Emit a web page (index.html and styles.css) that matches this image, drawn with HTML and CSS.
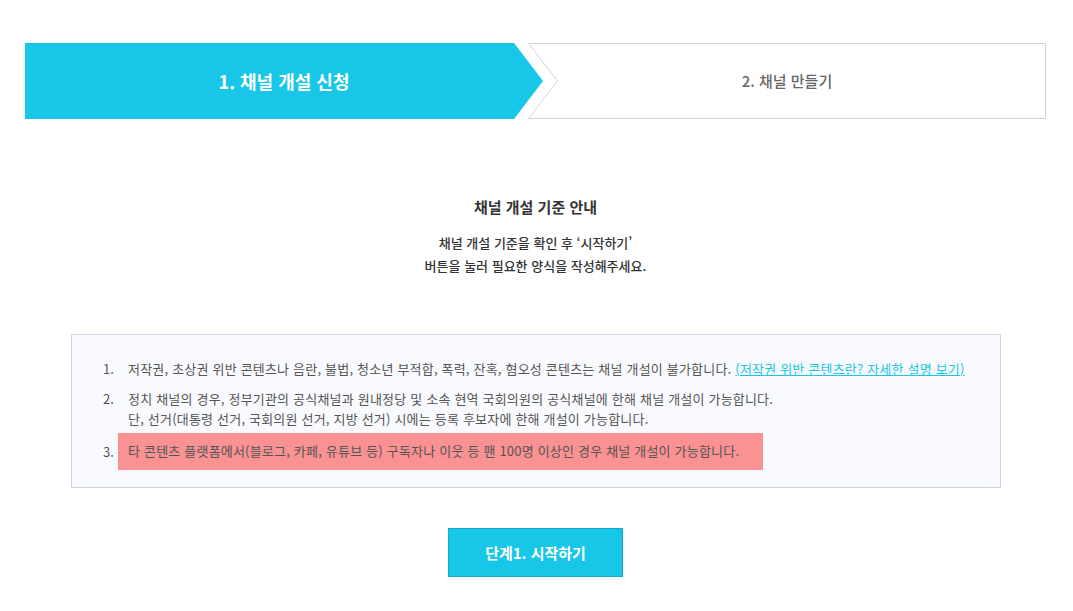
FILE: index.html
```html
<!DOCTYPE html>
<html lang="ko">
<head>
<meta charset="utf-8">
<title>채널 개설</title>
<link rel="stylesheet" href="styles.css">
</head>
<body>
<div class="page">
  <div class="steps">
    <div class="step step-active"><span>1. 채널 개설 신청</span></div>
    <div class="step step-next">
      <svg class="step-frame" width="518" height="76" viewBox="0 0 518 76" aria-hidden="true">
        <polygon points="0.5,0.5 517.5,0.5 517.5,75.5 0.5,75.5 29.5,38" fill="#fff" stroke="#cdd4df" stroke-width="1"/>
      </svg>
      <span>2. 채널 만들기</span>
    </div>
  </div>

  <section class="intro">
    <h2 class="intro-title">채널 개설 기준 안내</h2>
    <p class="intro-text">채널 개설 기준을 확인 후 ‘시작하기’<br>버튼을 눌러 필요한 양식을 작성해주세요.</p>
  </section>

  <div class="rules">
    <ol class="rules-list">
      <li class="rule"><span class="rule-num">1.</span><span class="rule-body">저작권, 초상권 위반 콘텐츠나 음란, 불법, 청소년 부적합, 폭력, 잔혹, 혐오성 콘텐츠는 채널 개설이 불가합니다. <a class="rule-link" href="#">(저작권 위반 콘텐츠란? 자세한 설명 보기)</a></span></li>
      <li class="rule"><span class="rule-num">2.</span><span class="rule-body">정치 채널의 경우, 정부기관의 공식채널과 원내정당 및 소속 현역 국회의원의 공식채널에 한해 채널 개설이 가능합니다.<br>단, 선거(대통령 선거, 국회의원 선거, 지방 선거) 시에는 등록 후보자에 한해 개설이 가능합니다.</span></li>
      <li class="rule rule-highlight"><span class="rule-num">3.</span><span class="rule-body">타 콘텐츠 플랫폼에서(블로그, 카페, 유튜브 등) 구독자나 이웃 등 팬 100명 이상인 경우 채널 개설이 가능합니다.</span></li>
    </ol>
  </div>

  <div class="actions">
    <button class="start-btn" type="button">단계1. 시작하기</button>
  </div>
</div>
</body>
</html>
```

FILE: styles.css
```css
* { box-sizing: border-box; }

html, body {
  margin: 0;
  padding: 0;
  background: #fff;
}

body {
  font-family: "Noto Sans CJK KR", "Noto Sans", sans-serif;
  color: #333;
}

.page {
  width: 1073px;
  padding: 43px 27px 0 25px;
}

.steps {
  display: flex;
  height: 76px;
}

.step {
  position: relative;
  width: 518px;
  height: 76px;
  display: flex;
  align-items: center;
  justify-content: center;
}

.step-active {
  background: #18c7e7;
  color: #fff;
  font-size: 18px;
  font-weight: 700;
  clip-path: polygon(0 0, 489px 0, 518px 50%, 489px 100%, 0 100%);
  z-index: 2;
}

.step-next {
  margin-left: -15px;
  color: #666;
  font-size: 15px;
  font-weight: 500;
  z-index: 1;
}

.step-frame {
  position: absolute;
  left: 0;
  top: 0;
}

.step span {
  position: relative;
  line-height: 20px;
}

.intro {
  text-align: center;
  margin-top: 78px;
}

.intro-title {
  margin: 0;
  font-size: 15px;
  line-height: 20px;
  font-weight: 700;
  color: #333;
}

.intro-text {
  margin: 14px 0 0;
  font-size: 13px;
  line-height: 23px;
  font-weight: 500;
  color: #333;
}

.rules {
  margin: 57px 45px 0 46px;
  border: 1px solid #cbd3df;
  background: #f9fafd;
  padding: 24px 0 17px;
}

.rules-list {
  list-style: none;
  margin: 0;
  padding: 0 0 0 31px;
}

.rule {
  display: grid;
  grid-template-columns: 25px auto;
  justify-content: start;
  align-items: center;
  font-size: 13px;
  line-height: 20px;
  color: #555;
  letter-spacing: 0.2px;
}

.rule + .rule { margin-top: 10px; }

.rule-num { align-self: start; letter-spacing: 0; }

.rule-highlight { margin-top: 4px !important; }

.rule-highlight .rule-num { align-self: center; }

.rule-highlight .rule-body {
  background: #fa9192;
  margin-left: -10px;
  width: 645px;
  padding: 8px 10px 9px;
}

.rule-link {
  color: #18c7e7;
  text-decoration: underline;
}

.actions {
  display: flex;
  justify-content: center;
  margin-top: 40px;
}

.start-btn {
  width: 175px;
  height: 49px;
  background: #18c7e7;
  border: 1px solid #14a9c6;
  color: #fff;
  font-family: inherit;
  font-size: 15px;
  font-weight: 700;
  padding: 0;
}
```
